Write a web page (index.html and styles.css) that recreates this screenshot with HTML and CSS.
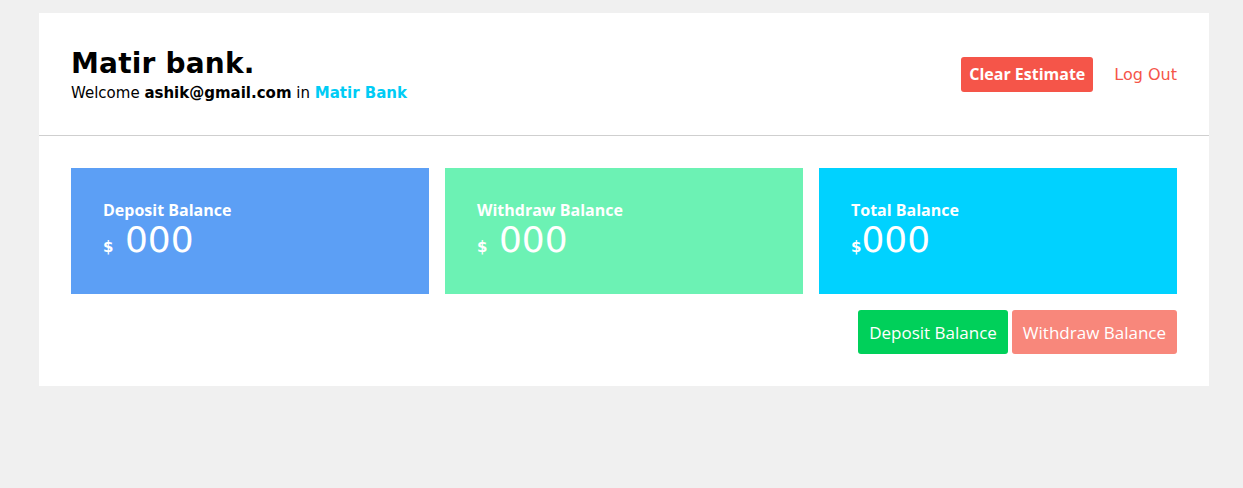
FILE: index.html
```html
<!DOCTYPE html>
<html>
<head>
<meta charset="utf-8">
<link rel="stylesheet" href="styles.css">
</head>
<body>
<div class="page">
  <div class="card">
    <header class="header">
      <div class="brand">
        <h1 class="title">Matir bank.</h1>
        <p class="welcome">Welcome <b>ashik@gmail.com</b> in <span class="bank">Matir Bank</span></p>
      </div>
      <div class="actions">
        <button class="btn-clear">Clear Estimate</button>
        <a class="logout">Log Out</a>
      </div>
    </header>
    <section class="body">
      <div class="stats">
        <div class="stat stat-deposit">
          <div class="stat-label">Deposit Balance</div>
          <div class="stat-value"><span class="cur">$</span> 000</div>
        </div>
        <div class="stat stat-withdraw">
          <div class="stat-label">Withdraw Balance</div>
          <div class="stat-value"><span class="cur">$</span> 000</div>
        </div>
        <div class="stat stat-total">
          <div class="stat-label">Total Balance</div>
          <div class="stat-value"><span class="cur">$</span>000</div>
        </div>
      </div>
      <div class="ops">
        <button class="op op-deposit">Deposit Balance</button>
        <button class="op op-withdraw">Withdraw Balance</button>
      </div>
    </section>
  </div>
</div>
</body>
</html>
```

FILE: styles.css
```css
* { box-sizing: border-box; }
html, body { margin: 0; padding: 0; }
body {
  background: #f0f0f0;
  font-family: "DejaVu Sans", "Open Sans", sans-serif;
  color: #000;
}
.page {
  padding: 13px 34px 0 39px;
}
.card {
  background: #fff;
  width: 1170px;
}
.header {
  display: flex;
  justify-content: space-between;
  align-items: center;
  padding: 32px 32px 32px;
  border-bottom: 1px solid #cfcfcf;
}
.title {
  margin: 0;
  font-size: 28px;
  line-height: 38px;
  font-weight: bold;
  letter-spacing: 0.2px;
}
.welcome {
  margin: 0;
  font-size: 15px;
  line-height: 20px;
}
.welcome b { font-weight: bold; }
.bank { color: #00ccf5; font-weight: bold; }
.actions {
  display: flex;
  align-items: center;
  gap: 21px;
}
.btn-clear {
  background: #f55549;
  color: #fff;
  border: 0;
  border-radius: 3px;
  height: 35px;
  padding: 0 8px;
  font-family: "Open Sans", sans-serif;
  font-weight: bold;
  font-size: 16px;
}
.logout {
  color: #f55549;
  font-size: 16px;
}
.body {
  padding: 32px 32px 32px;
}
.stats {
  display: grid;
  grid-template-columns: repeat(3, 1fr);
  gap: 16px;
}
.stat {
  height: 126px;
  padding: 32px 32px;
  color: #fff;
}
.stat-deposit { background: #5c9ff5; }
.stat-withdraw { background: #6cf2b4; }
.stat-total { background: #00d2ff; }
.stat-label {
  font-family: "Open Sans", sans-serif;
  font-weight: bold;
  font-size: 16px;
  line-height: 20px;
}
.stat-value {
  font-size: 36px;
  line-height: 40px;
}
.cur {
  font-size: 15px;
  font-weight: bold;
}
.ops {
  display: flex;
  justify-content: flex-end;
  gap: 4px;
  margin-top: 16px;
}
.op {
  height: 44px;
  border: 0;
  border-radius: 3px;
  color: #fff;
  font-family: "Open Sans", sans-serif;
  font-size: 17px;
  padding: 0 11px;
}
.op-deposit { background: #00d05a; }
.op-withdraw { background: #f8877b; }
```
